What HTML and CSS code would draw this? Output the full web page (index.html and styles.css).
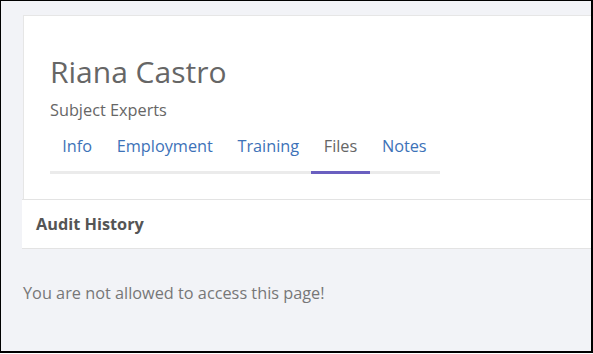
FILE: index.html
```html
<!DOCTYPE html>
<html>
<head>
  <link rel="stylesheet" href="styles.css">
</head>
<body>
  <div class="frame">
    <div class="profile">
      <h1 class="name">Riana Castro</h1>
      <p class="group">Subject Experts</p>
      <div class="tabs">
        <a class="tab">Info</a>
        <a class="tab">Employment</a>
        <a class="tab">Training</a>
        <a class="tab active">Files</a>
        <a class="tab">Notes</a>
      </div>
    </div>

    <div class="panel">
      <h2>Audit History</h2>
    </div>

    <p class="denied">You are not allowed to access this page!</p>
  </div>
</body>
</html>
```

FILE: styles.css
```css
html, body{
  margin:0;
  padding:0;
  background-color:#ffffff;
}
.frame{
  width:593px;
  height:353px;
  box-sizing:border-box;
  border-style:solid;
  border-color:#000000;
  border-width:1px 2px 2px 1px;
  background-color:#f2f3f7;
  overflow:hidden;
  font-family:"Open Sans", sans-serif;
  color:#666666;
}
.profile{
  margin:14px -40px 0 22px;
  padding:35px 0 25px 26px;
  background-color:#ffffff;
  border:1px solid #e6e6e6;
  border-bottom:none;
}
.name{
  margin:0;
  font-size:30px;
  font-weight:normal;
  color:#666666;
}
.group{
  margin:7px 0 0 0;
  font-size:16.3px;
  color:#666666;
}
.tabs{
  display:flex;
  width:390px;
  margin-top:4px;
  border-bottom:3px solid #ebebeb;
}
.tab{
  padding:10px 12.3px 14px 12.3px;
  font-size:16.3px;
  color:#3d72b8;
  border-bottom:3px solid transparent;
  margin-bottom:-3px;
  cursor:pointer;
}
.tab.active{
  color:#666666;
  border-bottom-color:#6a5fc0;
}
.panel{
  margin:0 -40px 0 21px;
  padding:13px 14px;
  background-color:#ffffff;
  border-top:1px solid #e3e3e3;
  border-bottom:1px solid #e3e3e3;
}
.panel h2{
  margin:0;
  font-size:16.3px;
  font-weight:bold;
  color:#555555;
}
.denied{
  margin:33px 0 0 22px;
  font-size:16.3px;
  color:#777777;
}
```
